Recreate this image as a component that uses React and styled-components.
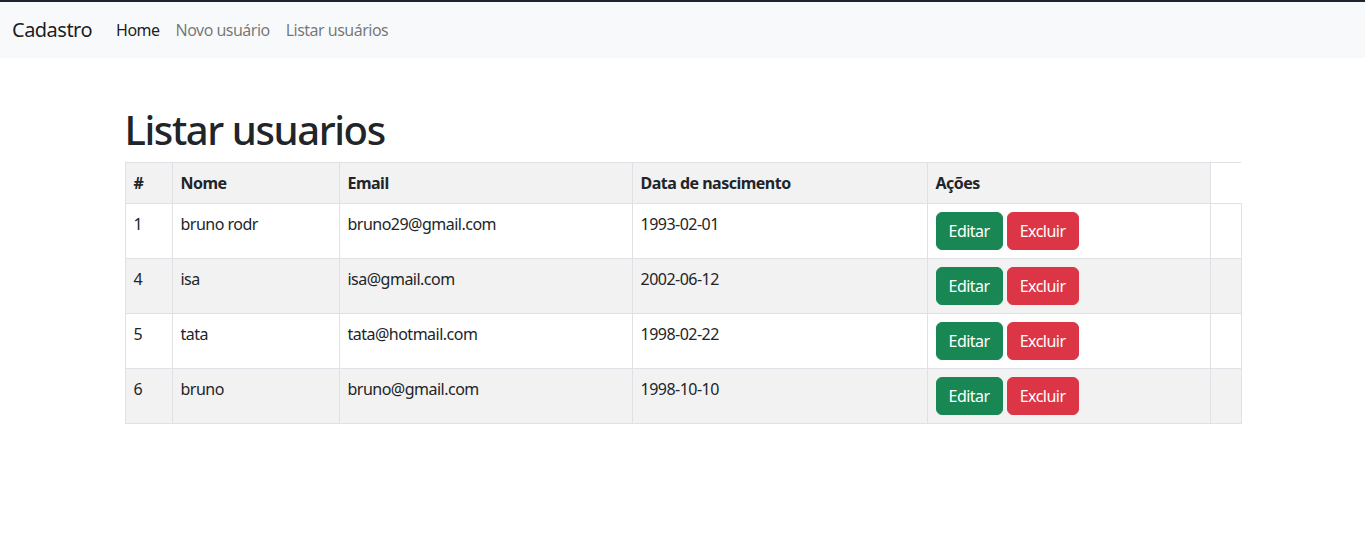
import React from 'react';
import styled, { createGlobalStyle } from 'styled-components';

const GlobalStyle = createGlobalStyle`
  * { box-sizing: border-box; }
  body {
    margin: 0;
    font-family: "Noto Sans", "Open Sans", sans-serif;
    font-size: 16px;
    line-height: 1.5;
    letter-spacing: -0.032em;
    color: #212529;
    background: #fff;
    border-top: 2px solid #1c2430;
  }
`;

const Navbar = styled.nav`
  display: flex;
  align-items: center;
  height: 56px;
  padding: 8px 12px;
  background: #f8f9fa;
`;

const Brand = styled.a`
  font-size: 20px;
  line-height: 30px;
  margin-right: 16px;
  color: rgba(0, 0, 0, 0.9);
  text-decoration: none;
`;

const NavLink = styled.a`
  padding: 8px;
  color: ${(p) => (p.$active ? 'rgba(0, 0, 0, 0.9)' : 'rgba(0, 0, 0, 0.55)')};
  text-decoration: none;
`;

const Container = styled.main`
  max-width: 1140px;
  margin: 0 auto;
  padding: 48px 12px 0;
`;

const Title = styled.h1`
  margin: 0 0 8px;
  font-size: 40px;
  font-weight: 500;
  line-height: 48px;
  letter-spacing: -1.4px;
`;

const Table = styled.table`
  width: 100%;
  table-layout: fixed;
  border-collapse: collapse;
  border-color: #dee2e6;
`;

const Row = styled.tr`
  border-top: 1px solid #dee2e6;
  border-bottom: 1px solid #dee2e6;
`;

const Head = styled.th`
  text-align: left;
  font-weight: 700;
  padding: 8px;
  background: #f2f2f2;
  border-left: 1px solid #dee2e6;
  border-right: 1px solid #dee2e6;
`;

const Cell = styled.td`
  padding: 8px;
  vertical-align: top;
  background: ${(p) => (p.$striped ? '#f2f2f2' : '#fff')};
  border-left: 1px solid #dee2e6;
  border-right: 1px solid #dee2e6;
  height: 55px;
`;

const Actions = styled.div`
  display: flex;
  gap: 4px;
`;

const Button = styled.button`
  font-family: inherit;
  font-size: 16px;
  line-height: 24px;
  letter-spacing: inherit;
  padding: 6px 12px;
  border: 1px solid ${(p) => p.$color};
  border-radius: 6px;
  background: ${(p) => p.$color};
  color: #fff;
  cursor: pointer;
`;

const users = [
  { id: 1, nome: 'bruno rodr', email: 'bruno29@gmail.com', data: '1993-02-01' },
  { id: 4, nome: 'isa', email: 'isa@gmail.com', data: '2002-06-12' },
  { id: 5, nome: 'tata', email: 'tata@hotmail.com', data: '1998-02-22' },
  { id: 6, nome: 'bruno', email: 'bruno@gmail.com', data: '1998-10-10' },
];

export default function App() {
  return (
    <>
      <GlobalStyle />
      <Navbar>
        <Brand href="#">Cadastro</Brand>
        <NavLink href="#" $active>Home</NavLink>
        <NavLink href="#">Novo usuário</NavLink>
        <NavLink href="#">Listar usuários</NavLink>
      </Navbar>
      <Container>
        <Title>Listar usuarios</Title>
        <Table>
          <colgroup>
            <col style={{ width: 47 }} />
            <col style={{ width: 167 }} />
            <col style={{ width: 293 }} />
            <col style={{ width: 295 }} />
            <col style={{ width: 283 }} />
            <col style={{ width: 31 }} />
          </colgroup>
          <tbody>
            <Row>
              <Head>#</Head>
              <Head>Nome</Head>
              <Head>Email</Head>
              <Head>Data de nascimento</Head>
              <Head>Ações</Head>
            </Row>
            {users.map((u, i) => {
              const s = i % 2 === 1;
              return (
                <Row key={u.id}>
                  <Cell $striped={s}>{u.id}</Cell>
                  <Cell $striped={s}>{u.nome}</Cell>
                  <Cell $striped={s}>{u.email}</Cell>
                  <Cell $striped={s}>{u.data}</Cell>
                  <Cell $striped={s}>
                    <Actions>
                      <Button $color="#198754">Editar</Button>
                      <Button $color="#dc3545">Excluir</Button>
                    </Actions>
                  </Cell>
                  <Cell $striped={s} />
                </Row>
              );
            })}
          </tbody>
        </Table>
      </Container>
    </>
  );
}
